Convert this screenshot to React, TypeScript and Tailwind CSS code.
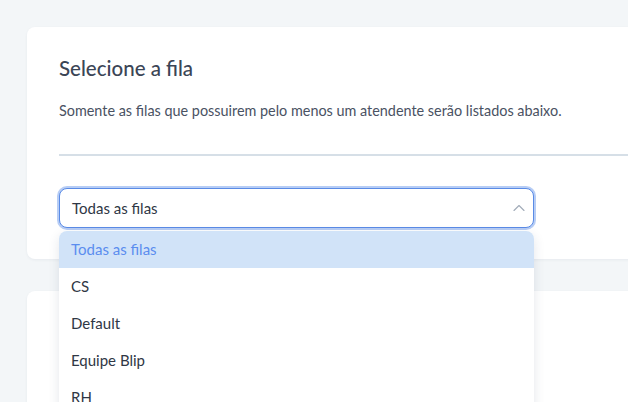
import { ChevronUp } from "lucide-react";

const filas = ["Todas as filas", "CS", "Default", "Equipe Blip", "RH"];

export default function App() {
  const selected = "Todas as filas";

  return (
    <div className="relative h-[402px] w-[628px] overflow-hidden bg-[#f3f6f8] pl-[27px] pt-[27px] font-['Lato',sans-serif]">
      <div className="w-[640px] rounded-lg bg-white px-8 pb-[31px] pt-[27px] shadow-[0_1px_3px_rgba(30,50,80,0.06)]">
        <h2 className="text-[20.5px] leading-7 font-medium text-[#3b4556]">Selecione a fila</h2>
        <p className="mt-[19px] text-[14.4px] leading-5 text-[#4a5263]">
          Somente as filas que possuirem pelo menos um atendente serão listados abaixo.
        </p>
        <div className="mt-[33px] h-[2px] bg-[#d6dfe7]" />

        <div className="relative mt-8 w-[475px]">
          <button className="flex h-10 w-full items-center justify-between rounded-lg border border-[#5a8be6] bg-white pl-3 pr-[4px] text-[15px] text-[#2f3745] ring-2 ring-[#b7cdf5]">
            <span>{selected}</span>
            <ChevronUp className="h-5 w-5 text-[#a3adba]" strokeWidth={1.4} />
          </button>

          <ul className="absolute left-0 top-[43px] z-10 w-full overflow-hidden rounded-t-lg bg-white shadow-[0_4px_12px_rgba(30,50,80,0.12)]">
            {filas.map((f) => (
              <li
                key={f}
                className={
                  f === selected
                    ? "flex h-[37px] items-center bg-[#d1e3f8] px-3 text-[15px] text-[#5b8def]"
                    : "flex h-[37px] items-center px-3 text-[15px] text-[#2f3745]"
                }
              >
                {f}
              </li>
            ))}
          </ul>
        </div>
      </div>

      <div className="mt-[32px] h-[200px] w-[640px] rounded-lg bg-white shadow-[0_1px_3px_rgba(30,50,80,0.06)]" />
    </div>
  );
}
